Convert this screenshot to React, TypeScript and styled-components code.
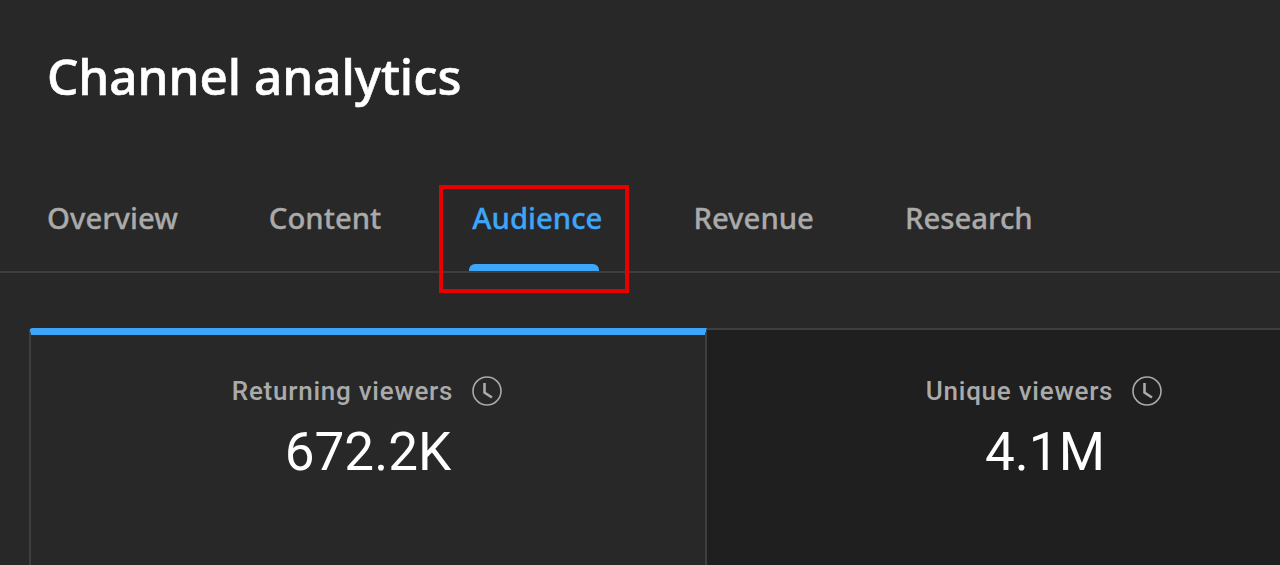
import { createGlobalStyle, styled } from 'styled-components';

const GlobalStyle = createGlobalStyle`
  html, body {
    margin: 0;
    height: 100%;
    background: #282828;
    overflow: hidden;
  }
`;

const TABS = ['Overview', 'Content', 'Audience', 'Revenue', 'Research'];
const ACTIVE_TAB = 'Audience';

const CARDS = [
  { label: 'Returning viewers', value: '672.2K' },
  { label: 'Unique viewers', value: '4.1M' },
];

const ClockIcon = () => (
  <svg width='30' height='30' viewBox='0 0 30 30' fill='none' stroke='#aaaaaa'>
    <circle cx='15' cy='15' r='14' strokeWidth='1.6' />
    <path d='M12.5 7v9.5l7.5 5' strokeWidth='2.6' />
  </svg>
);

export default function App() {
  return (
    <SC.Page>
      <GlobalStyle />
      <SC.Title>Channel analytics</SC.Title>
      <SC.Tabs>
        {TABS.map((tab) => (
          <SC.Tab key={tab} $active={tab === ACTIVE_TAB}>
            {tab}
            {tab === ACTIVE_TAB && <SC.Highlight />}
          </SC.Tab>
        ))}
      </SC.Tabs>
      <SC.Cards>
        {CARDS.map((card, index) => (
          <SC.Card key={card.label} $active={index === 0}>
            <SC.CardLabel>
              {card.label}
              <ClockIcon />
            </SC.CardLabel>
            <SC.CardValue>{card.value}</SC.CardValue>
          </SC.Card>
        ))}
      </SC.Cards>
    </SC.Page>
  );
}

const SC = {
  Page: styled.div`
    width: 1280px;
    height: 565px;
    overflow: hidden;
    background: #282828;
    font-family: 'Roboto', sans-serif;
  `,
  Title: styled.h1`
    margin: 0;
    padding: 43px 0 0 47px;
    height: 124px;
    box-sizing: border-box;
    font-family: 'Noto Sans', sans-serif;
    font-size: 49.4px;
    line-height: 66px;
    font-weight: 500;
    -webkit-text-stroke: 0.6px #ffffff;
    color: #ffffff;
  `,
  Tabs: styled.div`
    display: flex;
    gap: 91px;
    height: 149px;
    margin-bottom: 55px;
    padding: 0 47px;
    box-sizing: border-box;
    border-bottom: 2px solid #3e3e3e;
    align-items: flex-start;
  `,
  Tab: styled.div<{ $active: boolean }>`
    position: relative;
    padding-top: 73px;
    font-family: 'Noto Sans', sans-serif;
    font-size: 29.3px;
    line-height: 42px;
    font-weight: 500;
    -webkit-text-stroke: 0.3px ${({ $active }) => ($active ? '#3ea6f8' : '#aaaaaa')};
    color: ${({ $active }) => ($active ? '#3ea6f8' : '#aaaaaa')};

    ${({ $active }) =>
      $active &&
      `
      &::after {
        content: '';
        position: absolute;
        left: -3px;
        right: 3px;
        top: 140px;
        height: 7px;
        border-radius: 6px 6px 0 0;
        background: #3ea6f8;
      }
    `}
  `,
  Highlight: styled.span`
    position: absolute;
    left: -33px;
    right: -27px;
    top: 61px;
    height: 108px;
    box-sizing: border-box;
    border: 4px solid #e60000;
  `,
  Cards: styled.div`
    display: flex;
    margin-left: 29px;
    width: 1400px;
  `,
  Card: styled.div<{ $active: boolean }>`
    flex: 0 0 auto;
    width: ${({ $active }) => ($active ? '678px' : '676px')};
    height: 300px;
    box-sizing: border-box;
    padding-top: ${({ $active }) => ($active ? '38px' : '43px')};
    text-align: center;
    background: ${({ $active }) => ($active ? '#282828' : '#1f1f1f')};
    border-top: ${({ $active }) => ($active ? '7px solid #3ea6f8' : '2px solid #3e3e3e')};
    border-left: ${({ $active }) => ($active ? '2px solid #3e3e3e' : 'none')};
    border-right: ${({ $active }) => ($active ? '2px solid #3e3e3e' : 'none')};
    border-top-left-radius: ${({ $active }) => ($active ? '4px' : '0')};
  `,
  CardLabel: styled.div`
    display: flex;
    align-items: center;
    justify-content: center;
    gap: 19px;
    height: 36px;
    font-size: 26px;
    letter-spacing: 0.75px;
    font-weight: 500;
    color: #aaaaaa;
    transform: translateX(-1px);
  `,
  CardValue: styled.div`
    margin-top: 13px;
    font-size: 53px;
    line-height: 60px;
    color: #ffffff;
  `,
};
